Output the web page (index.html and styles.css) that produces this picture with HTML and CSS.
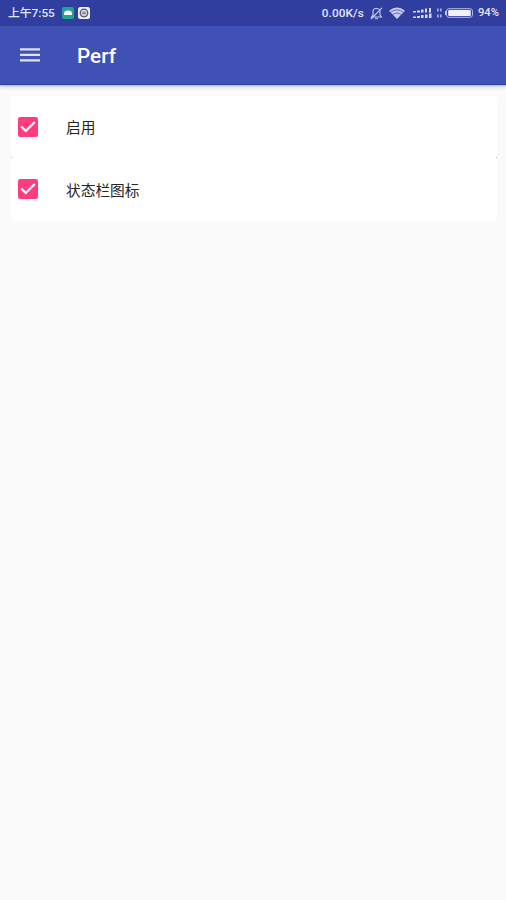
FILE: index.html
```
<!DOCTYPE html>
<html lang="zh-CN">
<head>
<meta charset="utf-8">
<title>Perf</title>
<link rel="stylesheet" href="styles.css">
</head>
<body>
<header class="status">
  <span class="time">上午7:55</span>
  <svg class="app-icon" width="12" height="12" viewBox="0 0 12 12"><rect width="12" height="12" rx="2" fill="#20a68c"/><path d="M2 8V6.500a4 3 0 0 1 8 0V8z" fill="#fff"/></svg>
  <svg class="face-icon" width="12" height="12" viewBox="0 0 12 12"><rect width="12" height="12" rx="2.5" fill="#f4f4fa"/><circle cx="6" cy="6" r="3.8" fill="#c9ccda" stroke="#555c75" stroke-width="1.3"/><path d="M4.2 5.3h3.6v1.5H4.2z" fill="#70768c"/></svg>
  <span class="speed">0.00K/s</span>
  <svg class="bell" width="13" height="13" viewBox="0 0 13 13" fill="none" stroke="#c9cdf0" stroke-width="1.1"><path d="M1.500 10h10L10 8V4.500C10 2.500 8.800 1.500 6.500 1.500S3 2.500 3 4.500V8zM5 11.700h3M12 .8L1 12"/></svg>
  <svg class="wifi" width="16" height="12" viewBox="0 0 16 12"><path d="M0 3.800Q8-2.600 16 3.800L8 12z" fill="#c6cbef"/><path d="M1.500 5.300Q8 .5 14.500 5.300M3.800 7.600Q8 4.500 12.200 7.600" fill="none" stroke="#4a57ae" stroke-width=".8"/></svg>
  <svg class="signal" width="32" height="12" viewBox="0 0 32 12" fill="#d5d8f4"><path d="M1 4h3v1.500H1zM5 3.500h3v2H5zM9 2.500h2.500v3H9zM13 1.500h2v4h-2zM17 1h2v4.500h-2zM1 9.500h3V11H1zM5 9h3v2H5zM9 8h2.500v3H9zM13 7.500h2.500V11H13zM17 6.500h2.500V11H17z"/><path d="M25 1.500h1.700v3H25zM28 1.500h1.700v3H28zM25 7.500h1.700v3H25zM28 7.500h1.700v3H28z" opacity=".7"/></svg>
  <svg class="battery" width="28" height="10" viewBox="0 0 28 10"><rect x="1.500" y=".7" width="26" height="8.600" rx="2.500" fill="none" stroke="#b5bce9"/><rect x="3.200" y="2" width="22.600" height="6" rx="1" fill="#f2f2fc"/><path d="M0 3h1.500v4H0z" fill="#c5caf0"/></svg>
  <span class="percent">94%</span>
</header>
<nav class="toolbar">
  <svg class="menu" width="22" height="16" viewBox="0 0 22 16" fill="#dfe2f5"><path d="M1 1.200h20v2.400H1zM1 6.700h20v2.400H1zM1 12.200h20v2.400H1z"/></svg>
  <h1 class="title">Perf</h1>
</nav>
<main class="content">
  <label class="row">
    <svg class="check" width="20" height="20" viewBox="0 0 20 20"><rect width="20" height="20" rx="2.200" fill="#fe3d7d"/><path d="M3.200 9.500L7.800 14 16.800 5" fill="none" stroke="#fff" stroke-width="2.300"/></svg>
    <span class="label">启用</span>
  </label>
  <div class="divider"></div>
  <label class="row">
    <svg class="check" width="20" height="20" viewBox="0 0 20 20"><rect width="20" height="20" rx="2.200" fill="#fe3d7d"/><path d="M3.200 9.500L7.800 14 16.800 5" fill="none" stroke="#fff" stroke-width="2.300"/></svg>
    <span class="label">状态栏图标</span>
  </label>
</main>
</body>
</html>
```
FILE: styles.css
```
body {
  margin: 0;
  min-height: 900px;
  background: #fafafa;
  font-family: Roboto, "Noto Sans CJK SC", sans-serif;
}

.status {
  display: flex;
  align-items: center;
  box-sizing: border-box;
  height: 26px;
  padding: 0 6px 0 8px;
  background: #303f9f;
  color: #e4e6f8;
  font-size: 11.8px;
  font-weight: 500;
  line-height: 26px;
  white-space: nowrap;
}

.time { width: 54px; }
.face-icon { margin-left: 4px; }
.speed { margin-left: auto; letter-spacing: 0.1px; }
.bell { margin-left: 6px; }
.wifi { margin-left: 6px; }
.signal { margin-left: 7px; }
.battery { margin-left: 1px; }
.percent { width: 22px; margin-left: 5px; font-size: 11.2px; }

.toolbar {
  display: flex;
  align-items: center;
  box-sizing: border-box;
  height: 59px;
  padding-left: 19px;
  border-bottom: 1px solid #2c40a4;
  background: #3f51b5;
  box-shadow: 0 1px 1px #bac3e5, 0 2px 4px #0000002e;
}

.title {
  margin: 0 0 0 36px;
  padding-top: 2px;
  color: #fff;
  font-size: 20.7px;
  font-weight: 500;
  line-height: 24px;
}

.content { padding: 11px 9px 0 11px; }

.row {
  display: flex;
  align-items: center;
  box-sizing: border-box;
  height: 61px;
  padding-left: 7px;
  border-radius: 4px 4px 0 0;
  background: #fff;
}

.divider {
  box-sizing: border-box;
  height: 1px;
  border: solid #bdbdbd;
  border-width: 0 1px;
  background: #fff;
}

.divider + .row {
  height: 63px;
  padding-bottom: 1px;
  border-radius: 0 0 4px 4px;
}

.label {
  margin-left: 28px;
  padding-top: 3px;
  color: #252525;
  font-size: 14.7px;
  line-height: 22px;
}
```
